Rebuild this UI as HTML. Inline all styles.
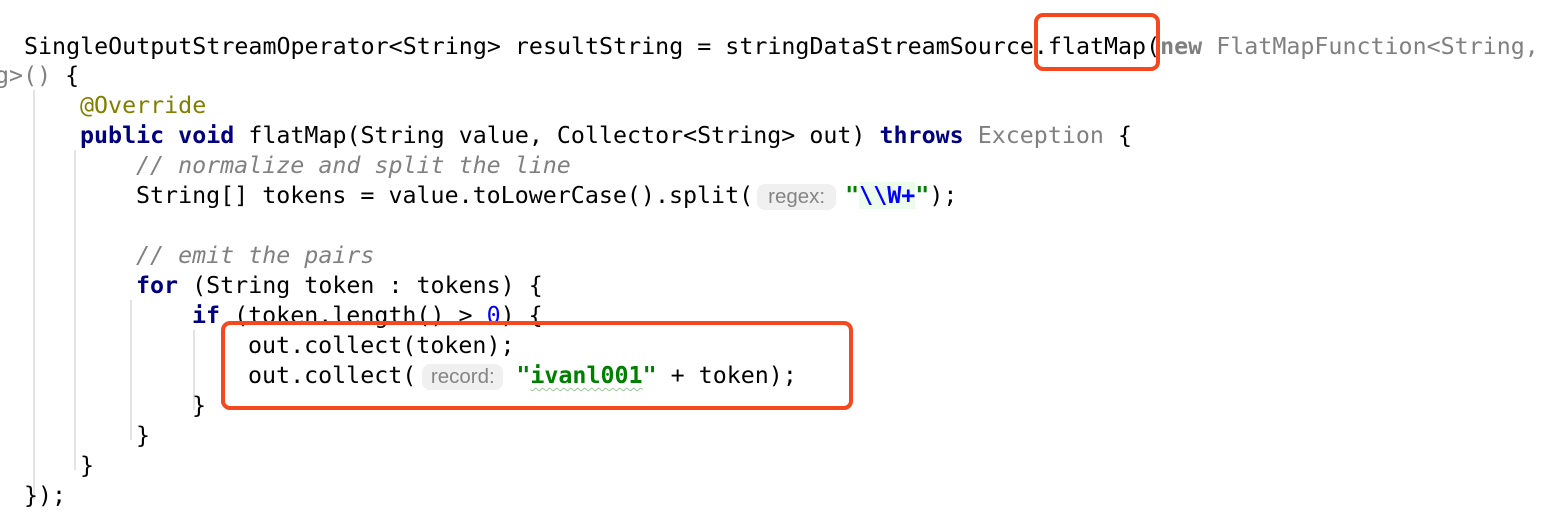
<!DOCTYPE html>
<html><head><meta charset="utf-8"><style>
html,body{margin:0;padding:0;background:#fff;width:1546px;height:528px;overflow:hidden;position:relative}
.l{position:absolute;white-space:pre;font-family:"DejaVu Sans Mono","Liberation Mono",monospace;font-size:23.3px;line-height:30px;height:30px;color:#000}
.k{color:#000080;font-weight:bold}
.a{color:#808000}
.c{color:#808080;font-style:italic}
.g{color:#808080}
.gb{color:#808080;font-weight:bold}
.s{color:#008000;font-weight:bold}
.n{color:#0000ff}
.re{color:#0000ff;font-weight:bold;background:#edfbed}
.p{display:inline-block;box-sizing:border-box;text-align:center;font-family:"Liberation Sans","DejaVu Sans",sans-serif;font-size:20.5px;color:#858585;background:#f0f0f0;border-radius:8px;line-height:26px;height:26px;vertical-align:0px;font-style:normal;font-weight:normal}
.sq{text-decoration:underline wavy #9c9;text-underline-offset:4px;text-decoration-thickness:1px}
.v{position:absolute;width:2px;background:#e4e4e4}
.box{position:absolute;border:4px solid #f5481f;border-radius:9px;box-sizing:border-box}
</style></head><body>
<div class="v" style="left:33px;top:90px;height:410px"></div>
<div class="v" style="left:74px;top:150px;height:320px"></div>
<div class="v" style="left:130px;top:300px;height:140px"></div>
<div class="v" style="left:193px;top:330px;height:80px"></div>

<div class="l" style="left:24px;top:32px">SingleOutputStreamOperator&lt;String&gt; resultString = stringDataStreamSource.flatMap(<span class="gb">new</span><span class="g"> FlatMapFunction&lt;String,</span></div>
<div class="l" style="left:-19px;top:61px"><span class="g">ng&gt;()</span> {</div>
<div class="l a" style="left:80px;top:91px">@Override</div>
<div class="l" style="left:80px;top:121px"><span class="k">public void</span> flatMap(String value, Collector&lt;String&gt; out) <span class="k">throws</span> <span class="g">Exception</span> {</div>
<div class="l c" style="left:136px;top:151px">// normalize and split the line</div>
<div class="l" style="left:136px;top:181px">String[] tokens = value.toLowerCase().split(<span class="p" style="width:79px;margin-left:4px;margin-right:9px">regex:</span><span class="s">"</span><span class="re">\\W+</span><span class="s">"</span>);</div>
<div class="l c" style="left:136px;top:241px">// emit the pairs</div>
<div class="l" style="left:136px;top:271px"><span class="k">for</span> (String token : tokens) {</div>
<div class="l" style="left:192px;top:301px"><span class="k">if</span> (token.length() &gt; <span class="n">0</span>) {</div>
<div class="l" style="left:248px;top:331px">out.collect(token);</div>
<div class="l" style="left:248px;top:361px">out.collect(<span class="p" style="width:81px;margin-left:6px;margin-right:13px">record:</span><span class="s">"<span class="sq">ivanl001</span>"</span> + token);</div>
<div class="l" style="left:192px;top:391px">}</div>
<div class="l" style="left:136px;top:421px">}</div>
<div class="l" style="left:80px;top:451px">}</div>
<div class="l" style="left:24px;top:481px">});</div>

<div class="box" style="left:1034px;top:13px;width:126px;height:58px"></div>
<div class="box" style="left:221px;top:321px;width:632px;height:89px"></div>
</body></html>
